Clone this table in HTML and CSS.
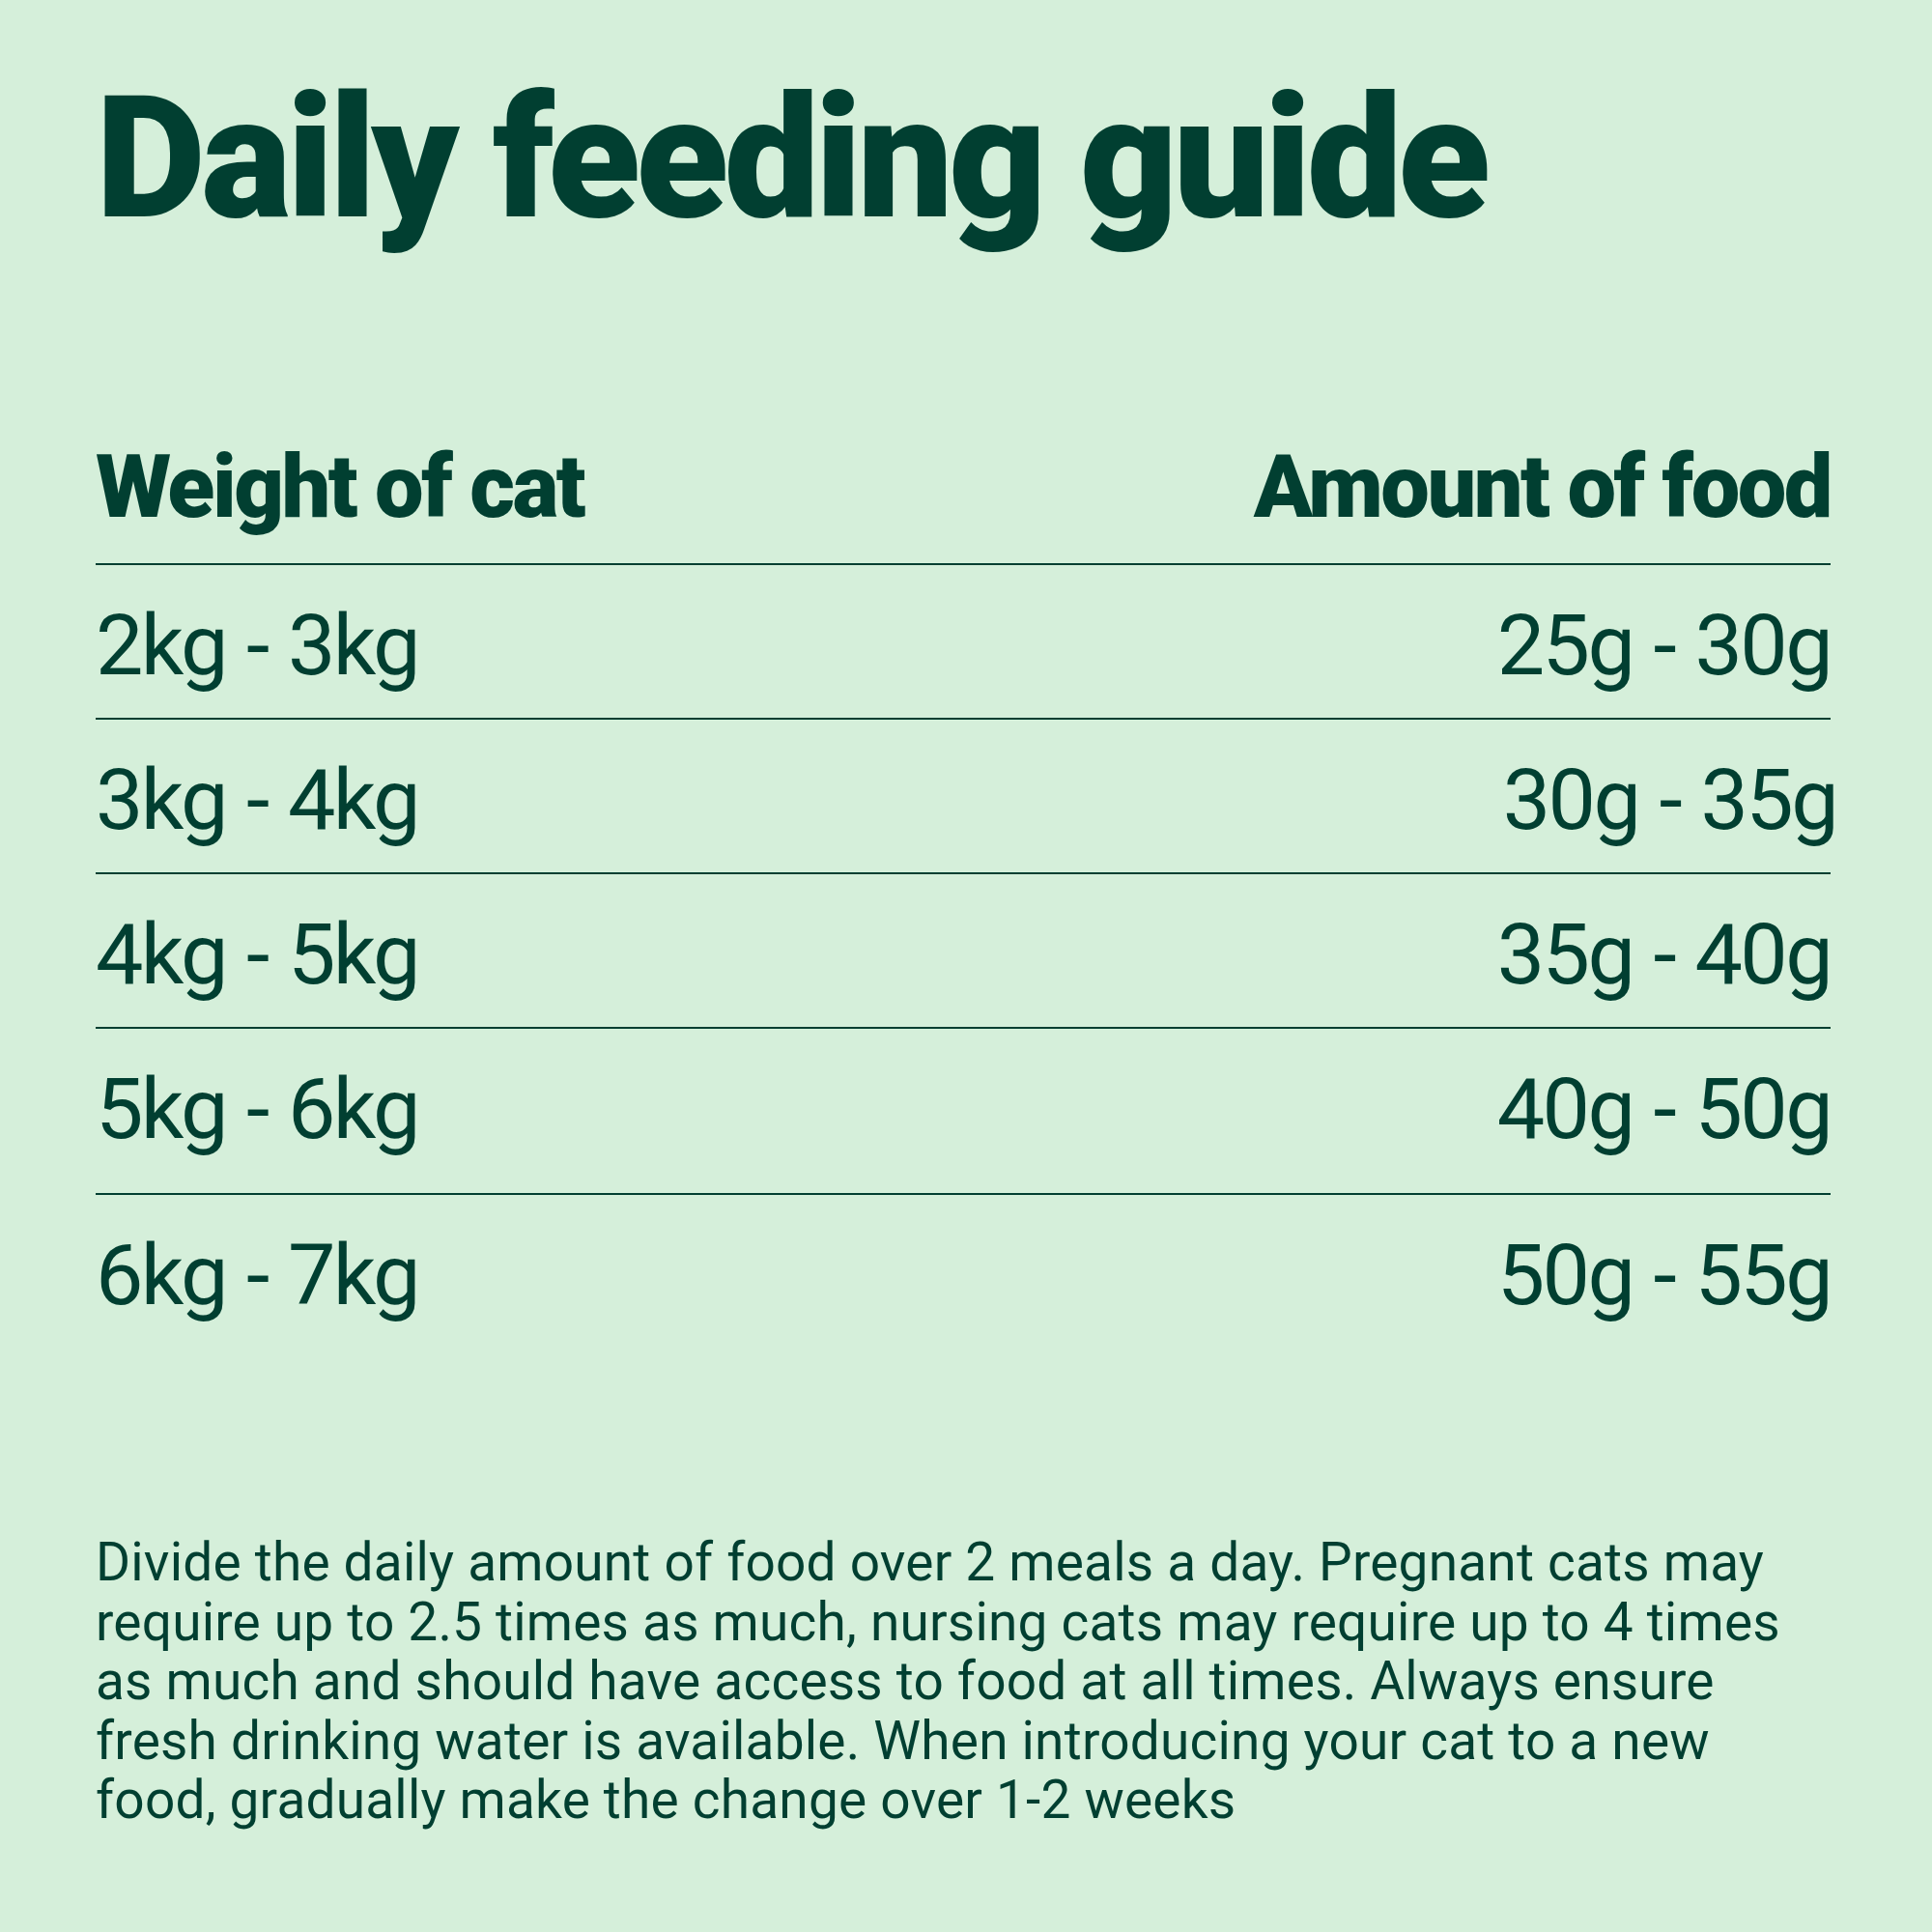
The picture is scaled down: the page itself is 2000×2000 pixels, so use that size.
FILE: index.html
```html
<!DOCTYPE html>
<html lang="en">
<head>
<meta charset="utf-8">
<title>Daily feeding guide</title>
<link rel="stylesheet" href="styles.css">
</head>
<body>
<main class="page">
  <h1 class="title">Daily feeding guide</h1>
  <section class="guide">
    <div class="guide-row guide-head">
      <span class="cell">Weight of cat</span>
      <span class="cell">Amount of food</span>
    </div>
    <div class="guide-row">
      <span class="cell">2kg - 3kg</span>
      <span class="cell">25g - 30g</span>
    </div>
    <div class="guide-row">
      <span class="cell">3kg - 4kg</span>
      <span class="cell cell-nudge">30g - 35g</span>
    </div>
    <div class="guide-row">
      <span class="cell">4kg - 5kg</span>
      <span class="cell">35g - 40g</span>
    </div>
    <div class="guide-row guide-row-tall">
      <span class="cell">5kg - 6kg</span>
      <span class="cell">40g - 50g</span>
    </div>
    <div class="guide-row guide-row-last">
      <span class="cell">6kg - 7kg</span>
      <span class="cell">50g - 55g</span>
    </div>
  </section>
  <p class="note">Divide the daily amount of food over 2 meals a day. Pregnant cats may<br>require up to 2.5 times as much, nursing cats may require up to 4 times<br>as much and should have access to food at all times. Always ensure<br>fresh drinking water is available. When introducing your cat to a new<br>food, gradually make the change over 1-2 weeks</p>
</main>
</body>
</html>
```
FILE: styles.css
```css
html, body {
  margin: 0;
  padding: 0;
  background: #d5efda;
}

body {
  width: 2000px;
  height: 2000px;
  color: #013f31;
  font-family: Roboto, "Liberation Sans", sans-serif;
}

.page {
  padding: 76px 105px 0 99px;
}

.title {
  margin: 0;
  font-size: 176px;
  line-height: 176px;
  font-weight: 900;
  letter-spacing: -4.7px;
}

.guide {
  margin-top: 208px;
  display: flex;
  flex-direction: column;
}

.guide-row {
  display: flex;
  justify-content: space-between;
  align-items: baseline;
  padding: 39px 0 31px;
  font-size: 88px;
  line-height: 88px;
  font-weight: 400;
  letter-spacing: -2.6px;
  word-spacing: 2px;
  border-bottom: 2px solid #013f31;
}

.guide-head {
  padding: 0 0 33px;
  font-size: 90px;
  line-height: 90px;
  font-weight: 900;
  letter-spacing: -2.5px;
  word-spacing: 0;
}

.guide-row-tall {
  padding-bottom: 43px;
}

.guide-row-last {
  border-bottom: none;
}

.cell-nudge {
  margin-right: -6px;
}

.note {
  margin: 192px 0 0;
  font-size: 55px;
  line-height: 61.5px;
  font-weight: 400;
  letter-spacing: 0.2px;
}
```
